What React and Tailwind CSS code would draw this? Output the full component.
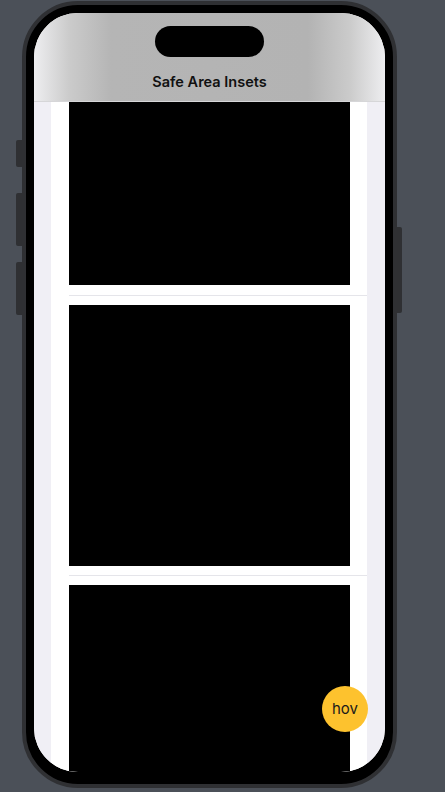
import React from 'react';

const sideButtons = [
  { side: 'left', top: 140, height: 27 },
  { side: 'left', top: 193, height: 53 },
  { side: 'left', top: 262, height: 53 },
  { side: 'right', top: 227, height: 86 },
];

function SideButton({ side, top, height }) {
  const sideClass = side === 'left' ? 'left-[16px] w-[6px] rounded-l-[2px]' : 'left-[397px] w-[5px] rounded-r-[2px]';
  return (
    <div
      className={`absolute bg-[#2f3033] ${sideClass}`}
      style={{ top, height }}
    />
  );
}

function Cell({ height, first, last }) {
  return (
    <div
      className={`pr-[17px] ${first ? 'pb-[10px]' : 'py-[9px]'} ${last ? '' : 'border-b border-[#e5e5ea]'}`}
    >
      <div className="bg-black" style={{ height }} />
    </div>
  );
}

export default function App() {
  return (
    <div className="relative h-[792px] w-[445px] overflow-hidden bg-[#4b5058] font-['Inter',sans-serif]">
      {sideButtons.map((button, index) => (
        <SideButton key={index} {...button} />
      ))}

      <div className="ml-[22px] mt-[1px] h-[787px] w-[375px] rounded-[56px] border-[4px] border-[#2f3033] bg-black px-[8px] pb-[12px] pt-[8px]">
        <div className="relative flex h-full flex-col overflow-hidden rounded-[44px] bg-white">
          <header className="flex flex-col items-center border-b border-[#d6d6d8] bg-[linear-gradient(to_right,#eeeef0_0%,#cbcbcb_10%,#b5b5b5_22%,#b3b3b3_78%,#cbcbcb_90%,#eeeef0_100%)] pb-[9px] pt-[13px]">
            <div className="h-[31px] w-[109px] rounded-full bg-black" />
            <h1 className="mt-[15px] text-[14.5px] font-semibold leading-[20px] text-[#111]">Safe Area Insets</h1>
          </header>

          <div className="flex min-h-0 flex-1">
            <div className="w-[17px] bg-[#f0eff5]" />
            <div className="flex-1 overflow-hidden bg-white pl-[18px]">
              <Cell height={183} first />
              <Cell height={261} />
              <Cell height={261} last />
            </div>
            <div className="w-[18px] bg-[#f0eff5]" />
          </div>

          <button className="absolute bottom-[40px] right-[17px] flex h-[46px] w-[46px] items-center justify-center rounded-full bg-[#fdc22e] text-[15px] text-[#1a1a1a]">
            hov
          </button>
        </div>
      </div>
    </div>
  );
}
